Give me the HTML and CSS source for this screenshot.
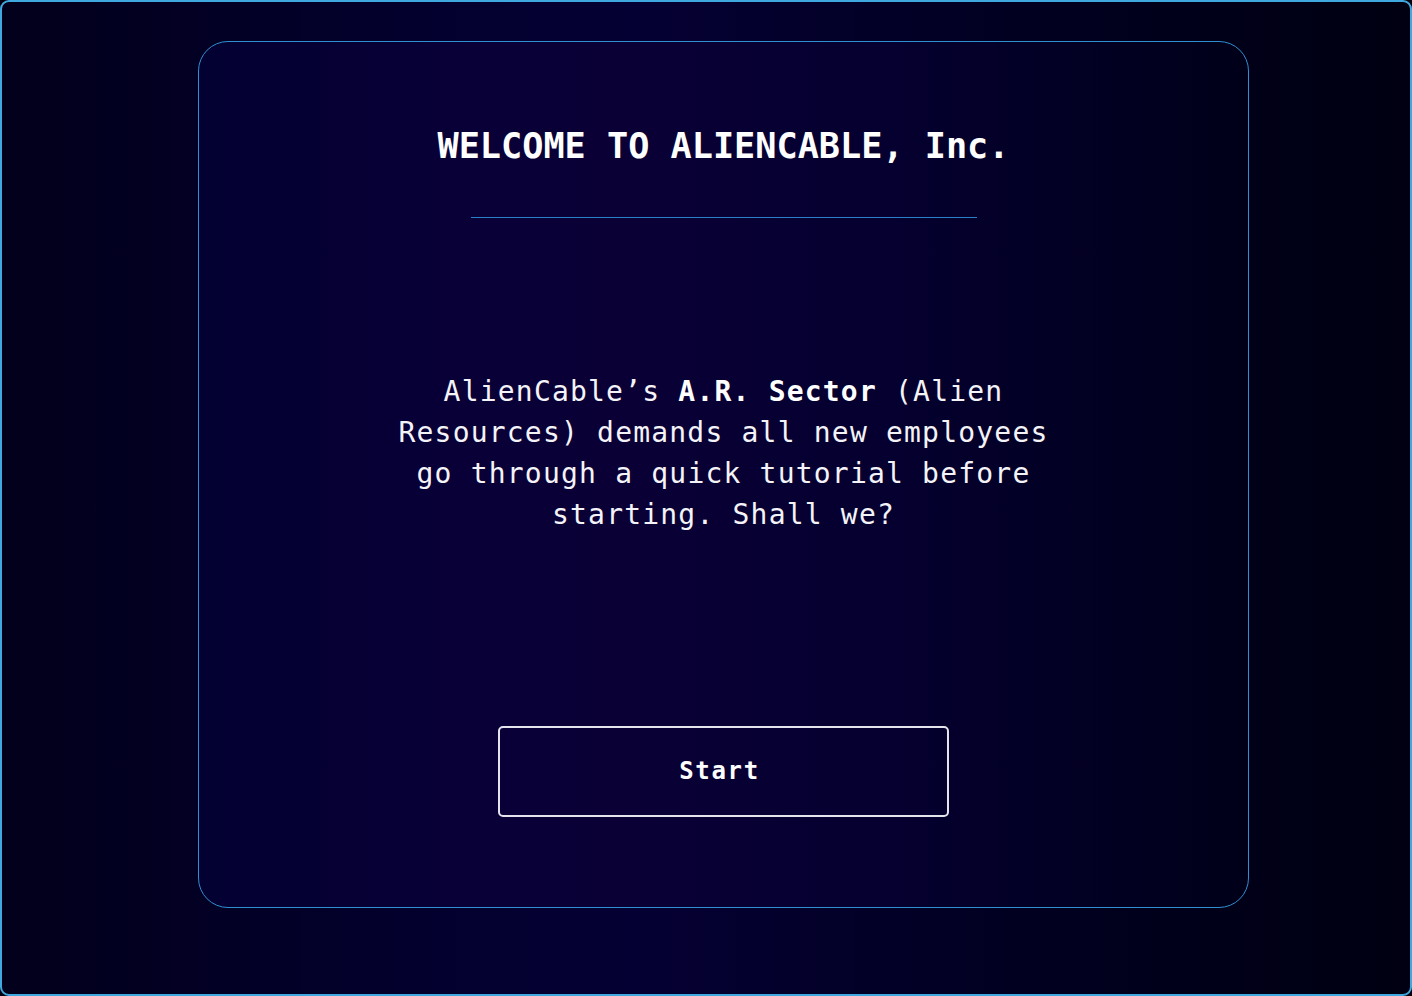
FILE: index.html
```html
<!DOCTYPE html>
<html lang="en">
<head>
<meta charset="utf-8">
<title>AlienCable</title>
<link rel="stylesheet" href="styles.css">
</head>
<body>
<div class="frame">
  <section class="card">
    <h1 class="title">WELCOME TO ALIENCABLE, Inc.</h1>
    <div class="divider"></div>
    <p class="intro">AlienCable’s <strong>A.R. Sector</strong> (Alien Resources) demands all new employees go through a quick tutorial before starting. Shall we?</p>
    <button class="start">Start</button>
  </section>
</div>
</body>
</html>
```

FILE: styles.css
```css
html, body {
  margin: 0;
  padding: 0;
  background: #000010;
}
.frame {
  width: 1412px;
  height: 996px;
  box-sizing: border-box;
  border: 2px solid #3fa9df;
  border-radius: 9px;
  background: linear-gradient(90deg, #02001b 0%, #03002e 30%, #050033 45%, #01001f 75%, #000012 100%);
  padding: 39px 0 0 196px;
  font-family: "DejaVu Sans Mono", monospace;
  color: #ffffff;
}
.card {
  width: 1051px;
  height: 867px;
  box-sizing: border-box;
  border: 1px solid #2f8fd0;
  border-radius: 30px;
  background: linear-gradient(90deg, #030032 0%, #080037 25%, #0a0036 40%, #050030 65%, #000019 100%);
  display: flex;
  flex-direction: column;
  align-items: center;
  padding-top: 84px;
}
.title {
  margin: 0;
  font-size: 35.2px;
  line-height: 40px;
  font-weight: bold;
  letter-spacing: 0;
}
.divider {
  width: 506px;
  height: 1px;
  background: #2a7fc8;
  margin-top: 51px;
}
.intro {
  margin: 153px 0 0 0;
  width: 670px;
  text-align: center;
  font-size: 28px;
  line-height: 41px;
  letter-spacing: 1.2px;
  color: #f4f4f8;
}
.intro strong {
  font-weight: bold;
  color: #ffffff;
}
.start {
  margin-top: 191px;
  width: 451px;
  height: 91px;
  box-sizing: border-box;
  border: 2px solid #e4e4ec;
  border-radius: 5px;
  background: transparent;
  color: #ffffff;
  font-family: "DejaVu Sans Mono", monospace;
  font-size: 24px;
  font-weight: bold;
  letter-spacing: 0.07em;
  padding: 0 8px 2px 0;
  cursor: pointer;
}
```
